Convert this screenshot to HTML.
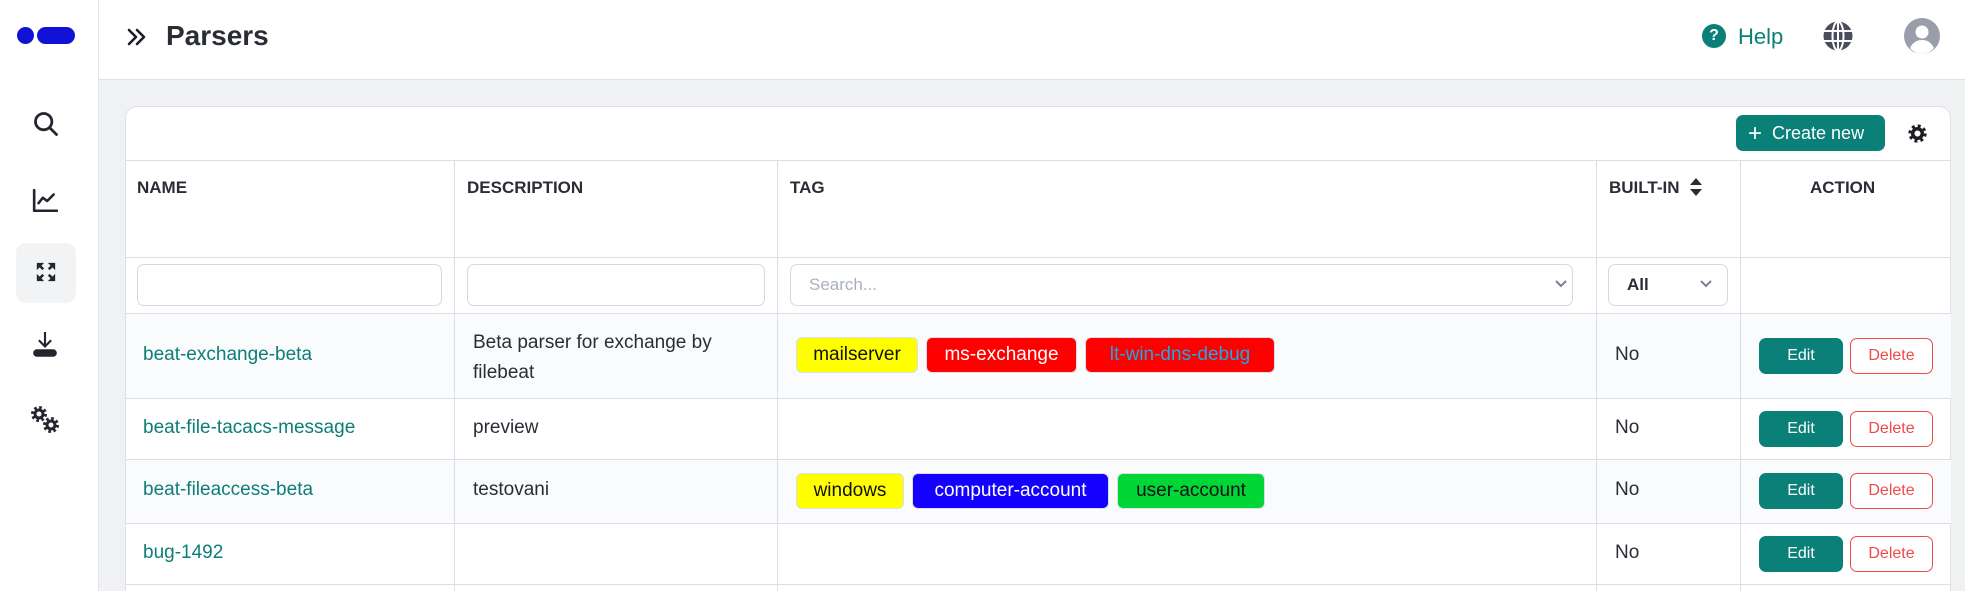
<!DOCTYPE html>
<html><head><meta charset="utf-8"><style>
*{box-sizing:border-box;margin:0;padding:0}
html,body{width:1965px;height:591px;overflow:hidden}
body{background:#f0f1f3;font-family:"Liberation Sans",sans-serif;color:#2a2d35;position:relative}
.a{position:absolute}
.side{left:0;top:0;width:99px;height:591px;background:#fff;border-right:1px solid #e2e3e8}
.top{left:99px;top:0;width:1866px;height:80px;background:#fff;border-bottom:1px solid #dfe0e5}
.card{left:125px;top:106px;width:1826px;height:500px;background:#fff;border:1px solid #dfe0e7;border-radius:12px}
.hl{height:1px;background:#dcdde6}
.vl{width:1px;background:#dcdde6}
.th{font-weight:bold;font-size:17px;color:#2a2d35}
.inp{border:1px solid #d6d8e2;border-radius:7px;background:#fff;height:42px}
.name{color:#0c7e77;font-size:19px}
.txt{font-size:19px;color:#2a2d35}
.tag{height:36px;border-radius:6px;border:1px solid #dcdde6;font-size:19px;line-height:34px;text-align:center}
.edit{width:84px;height:36px;background:#0b8079;border-radius:7px;color:#fff;font-size:16px;text-align:center;line-height:36px}
.del{width:83px;height:36px;border:1px solid #ef4b4b;border-radius:7px;color:#ef4b4b;font-size:16px;text-align:center;line-height:34px;background:#fff}
</style></head><body>
<div class="a side"></div>
<div class="a" style="left:17px;top:27px;width:17px;height:17px;border-radius:50%;background:#1212d6"></div>
<div class="a" style="left:37px;top:27px;width:38px;height:17px;border-radius:9px;background:#1212d6"></div>
<svg class="a" style="left:32px;top:110px" width="28" height="28" viewBox="0 0 24 24" fill="none" stroke="#23262e" stroke-width="2.4" stroke-linecap="round"><circle cx="10" cy="10" r="7"/><path d="M15 15l6 6"/></svg>
<svg class="a" style="left:32px;top:189px" width="26" height="24" viewBox="0 0 24 22" fill="none" stroke="#23262e" stroke-width="2.4" stroke-linecap="round" stroke-linejoin="round"><path d="M2 1v19h21"/><path d="M6 13l4-5 4 3 6-6"/></svg>
<div class="a" style="left:16px;top:243px;width:60px;height:60px;border-radius:10px;background:#f2f3f5"></div>
<svg class="a" style="left:35px;top:261px" width="22" height="22" viewBox="0 0 24 24" fill="#23262e"><path d="M2 2h8l-3 3 3 3-2 2-3-3-3 3z"/><path d="M22 22h-8l3-3-3-3 2-2 3 3 3-3z"/><path d="M22 2v8l-3-3-3 3-2-2 3-3-3-3z"/><path d="M2 22v-8l3 3 3-3 2 2-3 3 3 3z"/></svg>
<svg class="a" style="left:32px;top:332px" width="26" height="28" viewBox="0 0 24 26" fill="#23262e"><path d="M11 0h2v11l4-4 1.4 1.4L12 14.8 5.6 8.4 7 7l4 4z"/><rect x="1" y="16" width="22" height="7" rx="3.5"/></svg>
<svg class="a" style="left:30px;top:405px" width="32" height="30" viewBox="0 0 32 30"><g fill="none" stroke="#23262e"><circle cx="9" cy="9" r="6.5" stroke-width="3" stroke-dasharray="2.6 2.5"/><circle cx="9" cy="9" r="4" stroke-width="3"/><circle cx="21" cy="20" r="6.5" stroke-width="3" stroke-dasharray="2.6 2.5"/><circle cx="21" cy="20" r="4" stroke-width="3"/></g></svg>

<div class="a top"></div>
<svg class="a" style="left:126px;top:27px" width="22" height="20" viewBox="0 0 22 20" fill="none" stroke="#1d1f24" stroke-width="2.6" stroke-linecap="round" stroke-linejoin="round"><path d="M3 3l7 7-7 7M11 3l7 7-7 7"/></svg>
<div class="a" style="left:166px;top:20px;font-size:28px;font-weight:bold;color:#2a2d35">Parsers</div>
<div class="a" style="left:1702px;top:24px;width:24px;height:24px;border-radius:50%;background:#0b8079;color:#fff;font-weight:bold;font-size:16px;text-align:center;line-height:24px">?</div>
<div class="a" style="left:1738px;top:24px;font-size:22px;color:#0b8079">Help</div>
<svg class="a" style="left:1823px;top:21px" width="30" height="30" viewBox="0 0 30 30"><circle cx="15" cy="15" r="14.5" fill="#4a4d5c"/><g stroke="#fff" stroke-width="2" fill="none"><ellipse cx="15" cy="15" rx="5.5" ry="14.5"/><path d="M1 10h28M1 20h28M15 0v30"/></g></svg>
<svg class="a" style="left:1904px;top:18px" width="36" height="36" viewBox="0 0 36 36"><circle cx="18" cy="18" r="18" fill="#9a9eab"/><circle cx="18" cy="14" r="6.5" fill="#fff"/><path d="M6 30c3-6 7-8 12-8s9 2 12 8c-3 3.5-7 6-12 6s-9-2.5-12-6z" fill="#fff"/></svg>

<div class="a card"></div>
<div class="a" style="left:1736px;top:115px;width:149px;height:36px;border-radius:7px;background:#0b8079;color:#fff;font-size:18px;line-height:36px;padding-left:12px"><span style="font-size:24px;vertical-align:-2px">+</span>&nbsp; Create new</div>
<svg class="a" style="left:1907px;top:123px" width="21" height="21" viewBox="0 0 24 24"><g fill="none" stroke="#1d1f24"><circle cx="12" cy="12" r="8.5" stroke-width="4" stroke-dasharray="3.3 3.37"/><circle cx="12" cy="12" r="5.5" stroke-width="4"/></g></svg>

<div class="a hl" style="left:126px;top:160px;width:1825px"></div>
<div class="a hl" style="left:126px;top:257px;width:1825px"></div>
<div class="a" style="left:126px;top:314px;width:1825px;height:84px;background:#fafbfd"></div>
<div class="a" style="left:126px;top:460px;width:1825px;height:63px;background:#fafbfd"></div>
<div class="a hl" style="left:126px;top:313px;width:1825px"></div>
<div class="a hl" style="left:126px;top:398px;width:1825px"></div>
<div class="a hl" style="left:126px;top:459px;width:1825px"></div>
<div class="a hl" style="left:126px;top:523px;width:1825px"></div>
<div class="a hl" style="left:126px;top:584px;width:1825px"></div>
<div class="a vl" style="left:454px;top:160px;height:431px"></div>
<div class="a vl" style="left:777px;top:160px;height:431px"></div>
<div class="a vl" style="left:1596px;top:160px;height:431px"></div>
<div class="a vl" style="left:1740px;top:160px;height:431px"></div>

<div class="a th" style="left:137px;top:178px">NAME</div>
<div class="a th" style="left:467px;top:178px">DESCRIPTION</div>
<div class="a th" style="left:790px;top:178px">TAG</div>
<div class="a th" style="left:1609px;top:178px">BUILT-IN</div>
<svg class="a" style="left:1690px;top:178px" width="12" height="18" viewBox="0 0 12 18" fill="#2a2d35"><path d="M6 0l6 7H0zM6 18l6-7H0z"/></svg>
<div class="a th" style="left:1810px;top:178px">ACTION</div>

<div class="a inp" style="left:137px;top:264px;width:305px"></div>
<div class="a inp" style="left:467px;top:264px;width:298px"></div>
<div class="a inp" style="left:790px;top:264px;width:783px;color:#a9b0c4;font-size:17px;line-height:40px;padding-left:18px">Search...</div>
<svg class="a" style="left:1555px;top:280px" width="12" height="8" viewBox="0 0 12 8" fill="none" stroke="#7b8196" stroke-width="2"><path d="M1 1l5 5 5-5"/></svg>
<div class="a inp" style="left:1608px;top:264px;width:120px;font-size:17px;font-weight:bold;line-height:40px;padding-left:18px">All</div>
<svg class="a" style="left:1700px;top:280px" width="12" height="8" viewBox="0 0 12 8" fill="none" stroke="#7b8196" stroke-width="2"><path d="M1 1l5 5 5-5"/></svg>

<div class="a name" style="left:143px;top:344px">beat-exchange-beta</div>
<div class="a txt" style="left:473px;top:328px;line-height:30px">Beta parser for exchange by<br>filebeat</div>
<div class="a tag" style="left:796px;top:337px;width:122px;background:#ffff00;color:#111">mailserver</div>
<div class="a tag" style="left:926px;top:337px;width:151px;background:#ff0000;color:#fff">ms-exchange</div>
<div class="a tag" style="left:1085px;top:337px;width:190px;background:#ff0000;color:#1aa8e6">lt-win-dns-debug</div>
<div class="a txt" style="left:1615px;top:344px">No</div>
<div class="a edit" style="left:1759px;top:338px">Edit</div>
<div class="a del" style="left:1850px;top:338px">Delete</div>

<div class="a name" style="left:143px;top:417px">beat-file-tacacs-message</div>
<div class="a txt" style="left:473px;top:417px">preview</div>
<div class="a txt" style="left:1615px;top:417px">No</div>
<div class="a edit" style="left:1759px;top:411px">Edit</div>
<div class="a del" style="left:1850px;top:411px">Delete</div>

<div class="a name" style="left:143px;top:479px">beat-fileaccess-beta</div>
<div class="a txt" style="left:473px;top:479px">testovani</div>
<div class="a tag" style="left:796px;top:473px;width:108px;background:#ffff00;color:#111">windows</div>
<div class="a tag" style="left:912px;top:473px;width:197px;background:#1400ff;color:#fff">computer-account</div>
<div class="a tag" style="left:1117px;top:473px;width:148px;background:#00d636;color:#111">user-account</div>
<div class="a txt" style="left:1615px;top:479px">No</div>
<div class="a edit" style="left:1759px;top:473px">Edit</div>
<div class="a del" style="left:1850px;top:473px">Delete</div>

<div class="a name" style="left:143px;top:542px">bug-1492</div>
<div class="a txt" style="left:1615px;top:542px">No</div>
<div class="a edit" style="left:1759px;top:536px">Edit</div>
<div class="a del" style="left:1850px;top:536px">Delete</div>
</body></html>
